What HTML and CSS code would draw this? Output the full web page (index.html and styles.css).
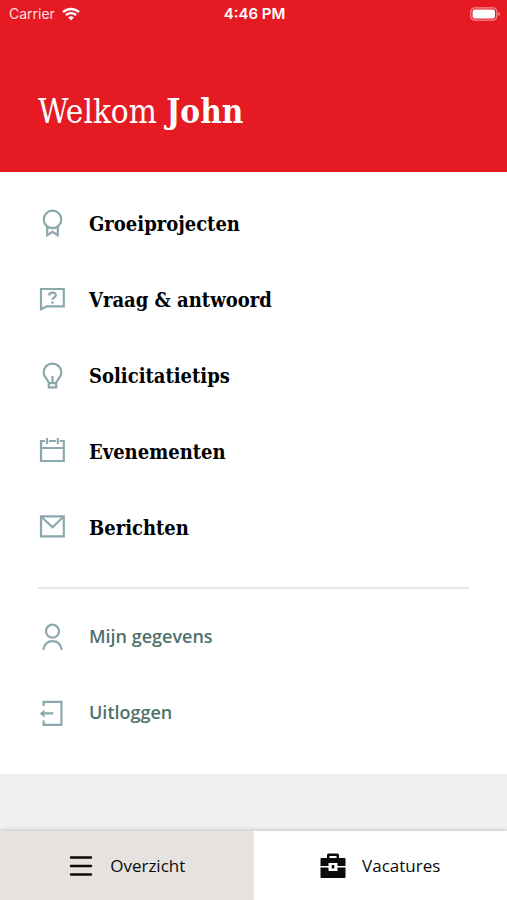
FILE: index.html
```html
<!DOCTYPE html>
<html lang="nl">
<head>
<meta charset="utf-8">
<meta name="viewport" content="width=device-width, initial-scale=1">
<title>Overzicht</title>
<link rel="stylesheet" href="styles.css">
</head>
<body>
<div class="app">
  <header class="header">
    <div class="status">
      <div class="carrier">
        <span>Carrier</span>
        <svg class="wifi" viewBox="0 0 18 14" aria-hidden="true">
          <path d="M1 5.2a11.5 11.5 0 0 1 16 0M3.9 8.2a7.4 7.4 0 0 1 10.2 0" fill="none" stroke="currentColor" stroke-width="2.4"/>
          <path d="M9 13.4L6.2 10.5a4 4 0 0 1 5.6 0z" fill="currentColor"/>
        </svg>
      </div>
      <span class="time">4:46 PM</span>
      <svg class="battery" viewBox="0 0 30 14" aria-hidden="true">
        <rect x=".8" y=".8" width="26" height="12.4" rx="4" fill="none" stroke="currentColor" stroke-width="1.2" opacity=".5"/>
        <rect x="2.6" y="2.5" width="22.4" height="9" rx="2.2" fill="currentColor"/>
        <path d="M28.4 5v4q1.4-.6 1.4-2t-1.4-2z" fill="currentColor" opacity=".6"/>
      </svg>
    </div>
    <h1 class="title">Welkom <strong>John</strong></h1>
  </header>

  <main class="menu">
    <nav class="list" aria-label="Menu">
      <a class="item" href="#">
        <svg class="icon" viewBox="0 0 28 28" aria-hidden="true"><circle cx="14.5" cy="9.4" r="8.8"/><path d="M9.2 17v8.2l5.3-3.4 5.300 3.400V17"/></svg>
        <span>Groeiprojecten</span>
      </a>
      <a class="item" href="#">
        <svg class="icon" viewBox="0 0 28 28" aria-hidden="true"><path d="M3 3h22.8v17.4H8.4L3 23.2z"/><path d="M11.2 9.6c0-4 6.6-3.9 6.6-.4 0 2.4-3.3 2.2-3.3 4.6M14.5 15.6v2.2"/></svg>
        <span>Vraag &amp; antwoord</span>
      </a>
      <a class="item" href="#">
        <svg class="icon" viewBox="0 0 28 28" aria-hidden="true"><path d="M10.800 21.200c0-3.400-5.200-5.200-5.200-11a8.900 8.600 0 0 1 17.800 0c0 5.800-5.200 7.600-5.200 11zM14.500 21v-7M10.800 21v4.300h7.400V21"/></svg>
        <span>Solicitatietips</span>
      </a>
      <a class="item" href="#">
        <svg class="icon" viewBox="0 0 28 28" aria-hidden="true"><path d="M7 3H3v20h22.800V3h-4M11 3h7M3 10h22.800M9 0v6M19.800 0v6"/></svg>
        <span>Evenementen</span>
      </a>
      <a class="item" href="#">
        <svg class="icon" viewBox="0 0 28 28" aria-hidden="true"><path d="M3 2.400h22.800v20H3zM3.400 2.800l11.100 10.400L25.400 2.800"/></svg>
        <span>Berichten</span>
      </a>
    </nav>
    <hr class="divider">
    <nav class="list" aria-label="Account">
      <a class="item account" href="#">
        <svg class="icon" viewBox="0 0 28 28" aria-hidden="true"><circle cx="14.500" cy="9.200" r="6.500"/><path d="M5.200 28c1-5.600 4.400-8.800 9.300-8.800s8.300 3.200 9.300 8.800"/></svg>
        <span>Mijn gegevens</span>
      </a>
      <a class="item account" href="#">
        <svg class="icon" viewBox="0 0 28 28" aria-hidden="true"><path d="M5.600 8V3.800h17.800v23H5.600V22.500M15.300 15.400H4"/><path class="solid" d="M6.500 11.400v8L1.800 15.400z"/></svg>
        <span>Uitloggen</span>
      </a>
    </nav>
  </main>

  <nav class="tabs" aria-label="Hoofdnavigatie">
    <a class="tab active" href="#" aria-current="page">
      <svg class="tab-icon" viewBox="0 0 26 26" aria-hidden="true"><path d="M3 4.500h20M3 13h20M3 21.500h20" fill="none" stroke="currentColor" stroke-width="2.400" stroke-linecap="round"/></svg>
      <span>Overzicht</span>
    </a>
    <a class="tab" href="#">
      <svg class="tab-icon" viewBox="0 0 26 26" aria-hidden="true"><path d="M7 5V2q0-1.500 1.500-1.500h9Q19 .500 19 2v3h5.500q1 0 1 1v7H17.500v-3h-9v3H.500V6q0-1 1-1zM9.500 3v2h7V3zM.500 14.500h8V18h9v-3.500h8V24q0 1-1 1h-23q-1 0-1-1z" fill="currentColor" fill-rule="evenodd"/><path d="M11.700 12h2.600v3.500h-2.600z" fill="currentColor"/></svg>
      <span>Vacatures</span>
    </a>
  </nav>
</div>
</body>
</html>
```
FILE: styles.css
```css
* { box-sizing: border-box; }

body {
  margin: 0;
  background: #f0f0f0;
  color: #0b0b0b;
  font-family: "Open Sans", "Noto Sans", sans-serif;
}

a { color: inherit; text-decoration: none; }

svg { display: block; flex: none; }

.app {
  display: flex;
  flex-direction: column;
  min-height: 100vh;
}

.header {
  padding-bottom: 36px;
  background: #e51a23;
  color: #fff;
}

.status {
  display: grid;
  grid-template-columns: 1fr auto 1fr;
  align-items: center;
  height: 28px;
  padding: 0 7px 0 9px;
  font: 14px/20px Inter, sans-serif;
}

.carrier { display: flex; align-items: center; gap: 7px; color: #ffdfe0; }
.wifi { width: 18px; height: 14px; color: #fff; }
.time { font-size: 15px; font-weight: 600; }
.battery { justify-self: end; width: 30px; height: 14px; }

.title {
  margin: 60px 38px 0;
  font: 400 33px/48px "DejaVu Serif Condensed", "DejaVu Serif", serif;
}

.title strong { font-weight: 700; }

.menu { padding: 14px 38px 24px; background: #fff; }

.item {
  display: flex;
  align-items: center;
  gap: 23px;
  height: 76px;
  color: #000;
  font: 700 20px/28px "DejaVu Serif Condensed", "DejaVu Serif", serif;
}

.account {
  color: #4f716c;
  font: 600 18px/28px "Open Sans", "Noto Sans", sans-serif;
}

.icon {
  width: 28px;
  height: 28px;
  overflow: visible;
  fill: none;
  stroke: #8ba8ae;
  stroke-width: 2.2;
}

.icon .solid { fill: #8ba8ae; stroke: none; }

.divider {
  height: 2px;
  margin: 21px 0 9px;
  border: 0;
  background: #e6e6e6;
}

.tabs {
  display: grid;
  grid-template-columns: 1fr 1fr;
  margin-top: auto;
  box-shadow: 0 -1px 4px rgba(0, 0, 0, 0.18);
}

.tab {
  display: flex;
  align-items: center;
  justify-content: center;
  gap: 16px;
  height: 69px;
  background: #fff;
  font-size: 17px;
  line-height: 24px;
}

.tab.active { background: #e5e2df; }
.tab-icon { width: 26px; height: 26px; }
```
